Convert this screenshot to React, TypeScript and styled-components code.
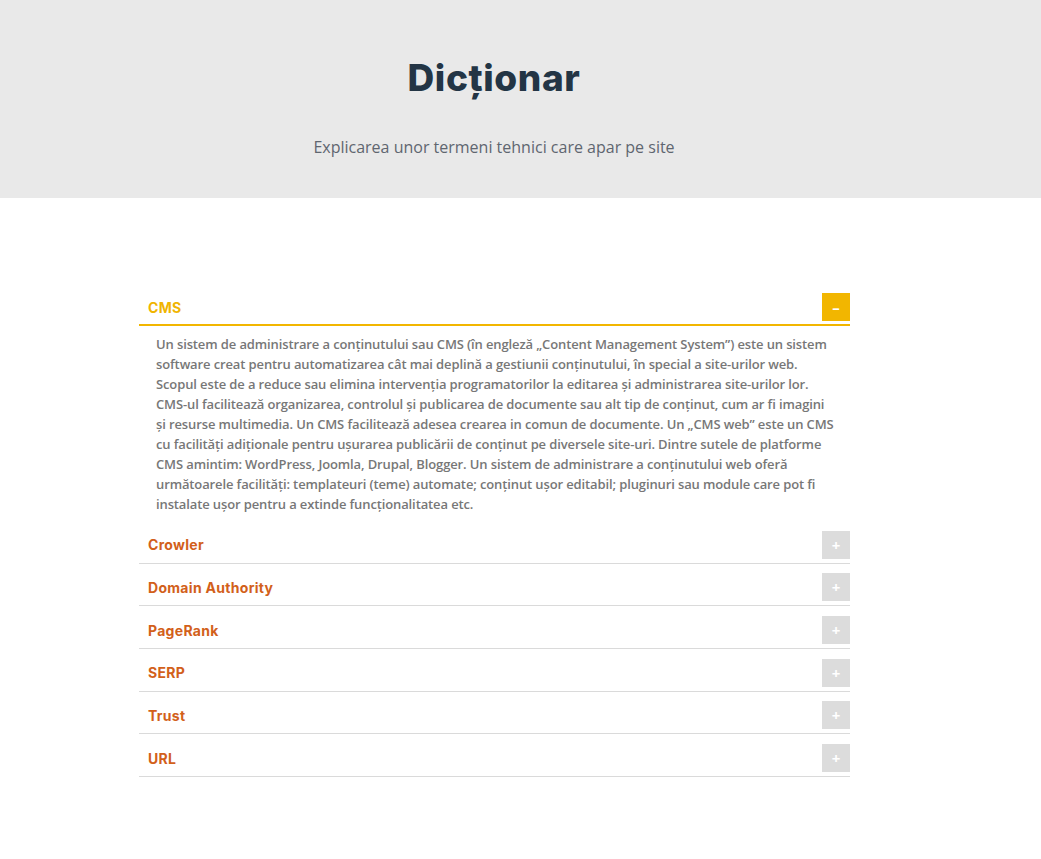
import { useState } from "react";
import styled, { createGlobalStyle } from "styled-components";

const GlobalStyle = createGlobalStyle`
  html, body {
    margin: 0;
    padding: 0;
    background: #ffffff;
  }
`;

const Hero = styled.header`
  background: #e9e9e9;
  height: 198px;
  display: flex;
  flex-direction: column;
  align-items: center;
  padding-right: 53px;
  box-sizing: border-box;
`;

const Title = styled.h1`
  margin: 56px 0 0;
  font-family: Inter, "Liberation Sans", sans-serif;
  font-weight: 800;
  font-size: 37px;
  line-height: 44px;
  letter-spacing: 0.6px;
  color: #233545;
`;

const Subtitle = styled.p`
  margin: 35px 0 0;
  font-family: "Open Sans", sans-serif;
  font-size: 16px;
  line-height: 24px;
  color: #5f6670;
`;

const Main = styled.main`
  padding: 93px 0 80px 139px;
`;

const Accordion = styled.div`
  width: 711px;
`;

const Item = styled.div<{ $open: boolean }>`
  border-bottom: ${({ $open }) => ($open ? "none" : "1px solid #dadada")};
`;

const Head = styled.div<{ $open: boolean }>`
  display: flex;
  align-items: center;
  justify-content: space-between;
  padding: ${({ $open }) => ($open ? "2px 0 3px 9px" : "9.7px 0 4px 9px")};
  border-bottom: ${({ $open }) => ($open ? "2px solid #f2b600" : "none")};
  cursor: pointer;
`;

const Term = styled.span<{ $open: boolean }>`
  font-family: Inter, "Liberation Sans", sans-serif;
  font-weight: 700;
  font-size: 14px;
  letter-spacing: 0.3px;
  color: ${({ $open }) => ($open ? "#f0b400" : "#d2601a")};
`;

const Toggle = styled.span<{ $open: boolean }>`
  width: 28px;
  height: 28px;
  display: flex;
  align-items: center;
  justify-content: center;
  background: ${({ $open }) => ($open ? "#f2b600" : "#dcdcdc")};
  color: #ffffff;
  font-family: "Open Sans", sans-serif;
  font-weight: 700;
  font-size: 15px;
`;

const Body = styled.div`
  padding: 8px 16px 7px 17px;
  font-family: "Open Sans", sans-serif;
  font-weight: 600;
  font-size: 13px;
  line-height: 20px;
  letter-spacing: -0.12px;
  color: #777777;
`;

const items = [
  {
    term: "CMS",
    text: "Un sistem de administrare a conținutului sau CMS (în engleză „Content Management System”) este un sistem software creat pentru automatizarea cât mai deplină a gestiunii conținutului, în special a site-urilor web. Scopul este de a reduce sau elimina intervenția programatorilor la editarea și administrarea site-urilor lor. CMS-ul facilitează organizarea, controlul și publicarea de documente sau alt tip de conținut, cum ar fi imagini și resurse multimedia. Un CMS facilitează adesea crearea in comun de documente. Un „CMS web” este un CMS cu facilități adiționale pentru ușurarea publicării de conținut pe diversele site-uri. Dintre sutele de platforme CMS amintim: WordPress, Joomla, Drupal, Blogger. Un sistem de administrare a conținutului web oferă următoarele facilități: templateuri (teme) automate; conținut ușor editabil; pluginuri sau module care pot fi instalate ușor pentru a extinde funcționalitatea etc.",
  },
  { term: "Crowler", text: "" },
  { term: "Domain Authority", text: "" },
  { term: "PageRank", text: "" },
  { term: "SERP", text: "" },
  { term: "Trust", text: "" },
  { term: "URL", text: "" },
];

export default function App() {
  const [open, setOpen] = useState<number | null>(0);

  return (
    <>
      <GlobalStyle />
      <Hero>
        <Title>Dicționar</Title>
        <Subtitle>Explicarea unor termeni tehnici care apar pe site</Subtitle>
      </Hero>
      <Main>
        <Accordion>
          {items.map((item, index) => {
            const isOpen = open === index;
            return (
              <Item key={item.term} $open={isOpen}>
                <Head
                  $open={isOpen}
                  onClick={() => setOpen(isOpen ? null : index)}
                >
                  <Term $open={isOpen}>{item.term}</Term>
                  <Toggle $open={isOpen}>{isOpen ? "–" : "+"}</Toggle>
                </Head>
                {isOpen && <Body>{item.text}</Body>}
              </Item>
            );
          })}
        </Accordion>
      </Main>
    </>
  );
}
